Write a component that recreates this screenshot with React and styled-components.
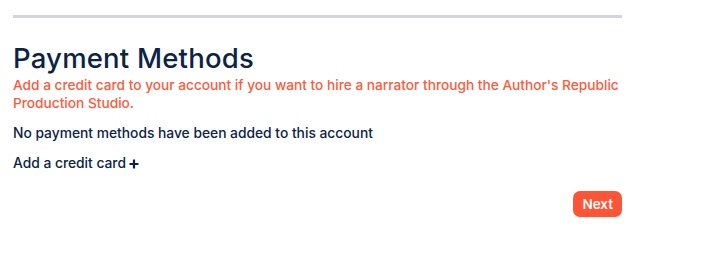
import styled, { createGlobalStyle } from "styled-components";

const GlobalStyle = createGlobalStyle`
    body {
        margin: 0;
        background: #fff;
        font-family: "Inter", "Noto Sans", sans-serif;
    }
`;

const Container = styled.div`
    width: 609px;
    margin-left: 13px;
    padding-top: 15px;
`;
const Divider = styled.hr`
    margin: 0;
    border: none;
    height: 3px;
    background: #d3d4de;
`;
const Title = styled.h1`
    margin: 24px 0 0;
    font-size: 27.5px;
    font-weight: 500;
    line-height: 33px;
    color: #0b2348;
    letter-spacing: 0.2px;
`;
const Notice = styled.p`
    margin: 2px 0 0;
    font-size: 13.7px;
    line-height: 17.5px;
    font-weight: 500;
    color: #ff5a3c;
    white-space: nowrap;
`;
const Text = styled.p`
    margin: ${(p) => p.$top}px 0 0;
    font-size: 13.8px;
    line-height: 17px;
    font-weight: 500;
    color: #0b2348;
    display: flex;
    align-items: center;
    gap: 3px;
`;
const Footer = styled.div`
    display: flex;
    justify-content: flex-end;
    margin-top: 19px;
`;
const Button = styled.button`
    border: none;
    background: #ff5435;
    color: #fff;
    font-family: inherit;
    font-size: 13.5px;
    font-weight: 600;
    height: 26px;
    padding: 0 9px;
    border-radius: 7px;
`;

const Plus = () => (
    <svg width="10" height="10" viewBox="0 0 10 10">
        <path d="M5 0.5v9M0.5 5h9" stroke="#0b2348" strokeWidth="2.2" />
    </svg>
);

const App = () => (
    <>
        <GlobalStyle />
        <Container>
            <Divider />
            <Title>Payment Methods</Title>
            <Notice>
                Add a credit card to your account if you want to hire a narrator through the Author's Republic
                <br />
                Production Studio.
            </Notice>
            <Text $top={13}>No payment methods have been added to this account</Text>
            <Text $top={13}>
                Add a credit card <Plus />
            </Text>
            <Footer>
                <Button>Next</Button>
            </Footer>
        </Container>
    </>
);

export default App;
